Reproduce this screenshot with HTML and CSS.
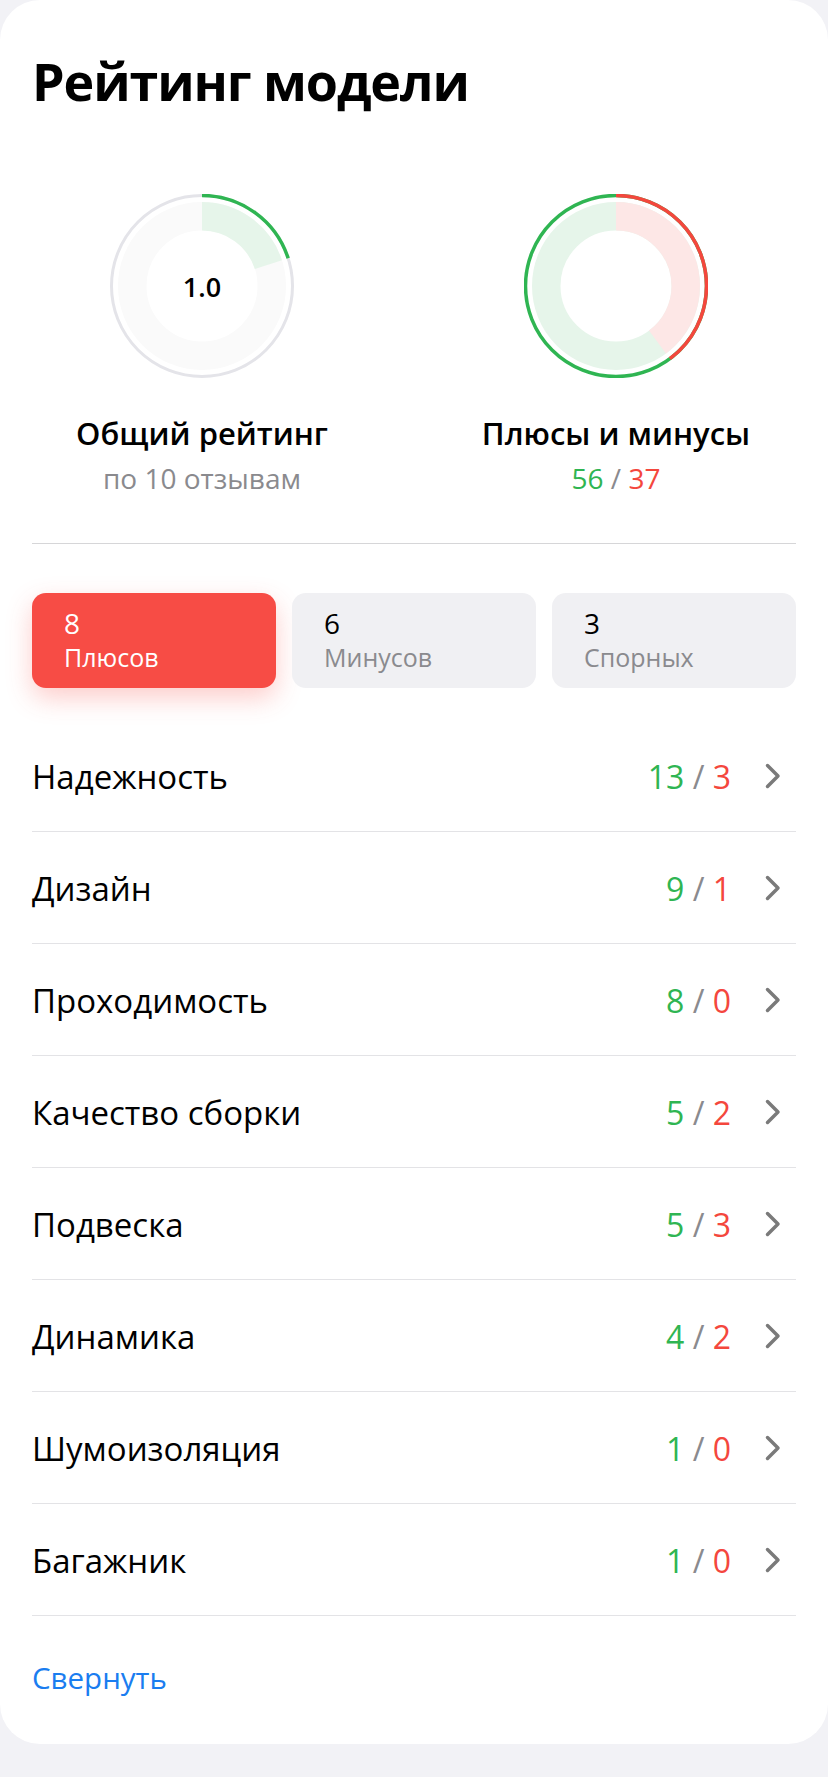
FILE: index.html
```html
<!DOCTYPE html>
<html lang="ru">
<head>
<meta charset="utf-8">
<title>Рейтинг модели</title>
<link rel="stylesheet" href="styles.css">
</head>
<body>
<div class="card">
  <h1 class="title">Рейтинг модели</h1>

  <div class="summary">
    <div class="stat">
      <div class="donut">
        <svg width="184" height="184" viewBox="0 0 184 184">
          <g transform="rotate(-90 92 92)">
            <circle cx="92" cy="92" r="69.75" fill="none" stroke="#fafafa" stroke-width="28.5"/>
            <circle cx="92" cy="92" r="69.75" fill="none" stroke="#e6f5ea" stroke-width="28.5" stroke-dasharray="87.65 400"/>
            <circle cx="92" cy="92" r="90.5" fill="none" stroke="#e4e4e9" stroke-width="3"/>
            <circle cx="92" cy="92" r="90.5" fill="none" stroke="#2fb552" stroke-width="3.5" stroke-dasharray="113.7 600"/>
          </g>
        </svg>
        <span class="donut-value">1.0</span>
      </div>
      <div class="stat-label">Общий рейтинг</div>
      <div class="stat-sub">по 10 отзывам</div>
    </div>
    <div class="stat">
      <div class="donut">
        <svg width="184" height="184" viewBox="0 0 184 184">
          <g transform="rotate(-90 92 92)">
            <circle cx="92" cy="92" r="69.75" fill="none" stroke="#e6f5ea" stroke-width="28.5"/>
            <circle cx="92" cy="92" r="69.75" fill="none" stroke="#fde7e6" stroke-width="28.5" stroke-dasharray="174.4 400"/>
            <circle cx="92" cy="92" r="90.5" fill="none" stroke="#2fb552" stroke-width="3.5"/>
            <circle cx="92" cy="92" r="90.5" fill="none" stroke="#f4473d" stroke-width="3.5" stroke-dasharray="226.2 600"/>
          </g>
        </svg>
      </div>
      <div class="stat-label">Плюсы и минусы</div>
      <div class="stat-sub"><span class="pos">56</span> <span class="sep">/</span> <span class="neg">37</span></div>
    </div>
  </div>

  <div class="divider"></div>

  <div class="tabs">
    <div class="tab tab-active">
      <div class="tab-num">8</div>
      <div class="tab-label">Плюсов</div>
    </div>
    <div class="tab">
      <div class="tab-num">6</div>
      <div class="tab-label">Минусов</div>
    </div>
    <div class="tab">
      <div class="tab-num">3</div>
      <div class="tab-label">Спорных</div>
    </div>
  </div>

  <ul class="list">
    <li class="row"><span class="row-name">Надежность</span><span class="row-score"><span class="pos">13</span> <span class="sep">/</span> <span class="neg">3</span></span><svg class="chev" width="16" height="26" viewBox="0 0 16 26"><path d="M2.5 2.5 L13 13 L2.5 23.5" fill="none" stroke="#7a7a7a" stroke-width="3.5" stroke-linecap="round" stroke-linejoin="round"/></svg></li>
    <li class="row"><span class="row-name">Дизайн</span><span class="row-score"><span class="pos">9</span> <span class="sep">/</span> <span class="neg">1</span></span><svg class="chev" width="16" height="26" viewBox="0 0 16 26"><path d="M2.5 2.5 L13 13 L2.5 23.5" fill="none" stroke="#7a7a7a" stroke-width="3.5" stroke-linecap="round" stroke-linejoin="round"/></svg></li>
    <li class="row"><span class="row-name">Проходимость</span><span class="row-score"><span class="pos">8</span> <span class="sep">/</span> <span class="neg">0</span></span><svg class="chev" width="16" height="26" viewBox="0 0 16 26"><path d="M2.5 2.5 L13 13 L2.5 23.5" fill="none" stroke="#7a7a7a" stroke-width="3.5" stroke-linecap="round" stroke-linejoin="round"/></svg></li>
    <li class="row"><span class="row-name">Качество сборки</span><span class="row-score"><span class="pos">5</span> <span class="sep">/</span> <span class="neg">2</span></span><svg class="chev" width="16" height="26" viewBox="0 0 16 26"><path d="M2.5 2.5 L13 13 L2.5 23.5" fill="none" stroke="#7a7a7a" stroke-width="3.5" stroke-linecap="round" stroke-linejoin="round"/></svg></li>
    <li class="row"><span class="row-name">Подвеска</span><span class="row-score"><span class="pos">5</span> <span class="sep">/</span> <span class="neg">3</span></span><svg class="chev" width="16" height="26" viewBox="0 0 16 26"><path d="M2.5 2.5 L13 13 L2.5 23.5" fill="none" stroke="#7a7a7a" stroke-width="3.5" stroke-linecap="round" stroke-linejoin="round"/></svg></li>
    <li class="row"><span class="row-name">Динамика</span><span class="row-score"><span class="pos">4</span> <span class="sep">/</span> <span class="neg">2</span></span><svg class="chev" width="16" height="26" viewBox="0 0 16 26"><path d="M2.5 2.5 L13 13 L2.5 23.5" fill="none" stroke="#7a7a7a" stroke-width="3.5" stroke-linecap="round" stroke-linejoin="round"/></svg></li>
    <li class="row"><span class="row-name">Шумоизоляция</span><span class="row-score"><span class="pos">1</span> <span class="sep">/</span> <span class="neg">0</span></span><svg class="chev" width="16" height="26" viewBox="0 0 16 26"><path d="M2.5 2.5 L13 13 L2.5 23.5" fill="none" stroke="#7a7a7a" stroke-width="3.5" stroke-linecap="round" stroke-linejoin="round"/></svg></li>
    <li class="row"><span class="row-name">Багажник</span><span class="row-score"><span class="pos">1</span> <span class="sep">/</span> <span class="neg">0</span></span><svg class="chev" width="16" height="26" viewBox="0 0 16 26"><path d="M2.5 2.5 L13 13 L2.5 23.5" fill="none" stroke="#7a7a7a" stroke-width="3.5" stroke-linecap="round" stroke-linejoin="round"/></svg></li>
  </ul>

  <a class="collapse" href="#">Свернуть</a>
</div>
</body>
</html>
```

FILE: styles.css
```css
html, body {
  margin: 0;
  padding: 0;
  background: #f2f2f6;
}
body {
  font-family: "Open Sans", "Noto Sans", sans-serif;
  color: #000;
  width: 828px;
  min-height: 1777px;
}
.card {
  background: #fff;
  border-radius: 40px;
  padding: 50px 32px 46px;
  display: flex;
  flex-direction: column;
}
.title {
  margin: 0;
  font-size: 52px;
  line-height: 62px;
  font-weight: 700;
  letter-spacing: -1.1px;
}
.summary {
  margin-top: 82px;
  display: grid;
  grid-template-columns: 340px 340px;
  column-gap: 74px;
}
.stat {
  display: flex;
  flex-direction: column;
  align-items: center;
}
.donut {
  position: relative;
  width: 184px;
  height: 184px;
}
.donut svg {
  display: block;
}
.donut-value {
  position: absolute;
  inset: 0;
  display: flex;
  align-items: center;
  justify-content: center;
  font-size: 27px;
  font-weight: 600;
}
.stat-label {
  margin-top: 35px;
  font-size: 31px;
  line-height: 40px;
  font-weight: 600;
  white-space: nowrap;
}
.stat-sub {
  margin-top: 7px;
  font-size: 28px;
  line-height: 36px;
  color: #8a8a8e;
}
.pos { color: #2fb552; }
.neg { color: #f4473d; }
.sep { color: #8a8a8e; }
.divider {
  margin-top: 47px;
  height: 1px;
  background: #d6d6d8;
}
.tabs {
  margin-top: 49px;
  display: grid;
  grid-template-columns: repeat(3, 1fr);
  column-gap: 16px;
}
.tab {
  height: 95px;
  box-sizing: border-box;
  padding: 13px 32px 0;
  border-radius: 14px;
  background: #f0f0f3;
}
.tab-num {
  font-size: 28px;
  line-height: 34px;
  font-weight: 500;
}
.tab-label {
  font-size: 25px;
  line-height: 34px;
  color: #8a8a8e;
}
.tab-active {
  background: #f74c45;
  box-shadow: 0 10px 26px rgba(247, 76, 69, 0.28);
}
.tab-active .tab-num,
.tab-active .tab-label {
  color: #fff;
}
.list {
  list-style: none;
  margin: 32px 0 0;
  padding: 0;
}
.row {
  height: 111px;
  box-sizing: content-box;
  border-bottom: 1px solid #e3e3e6;
  display: flex;
  align-items: center;
  font-size: 33px;
}
.row-name {
  flex: 1;
  padding-top: 2px;
}
.row-score {
  padding-top: 2px;
  margin-right: 34px;
  font-size: 32px;
}
.chev {
  margin-right: 15px;
  margin-top: 1px;
  display: block;
}
.collapse {
  margin-top: 42px;
  font-size: 29.5px;
  line-height: 40px;
  color: #1a7df0;
  text-decoration: none;
  align-self: flex-start;
}
```
